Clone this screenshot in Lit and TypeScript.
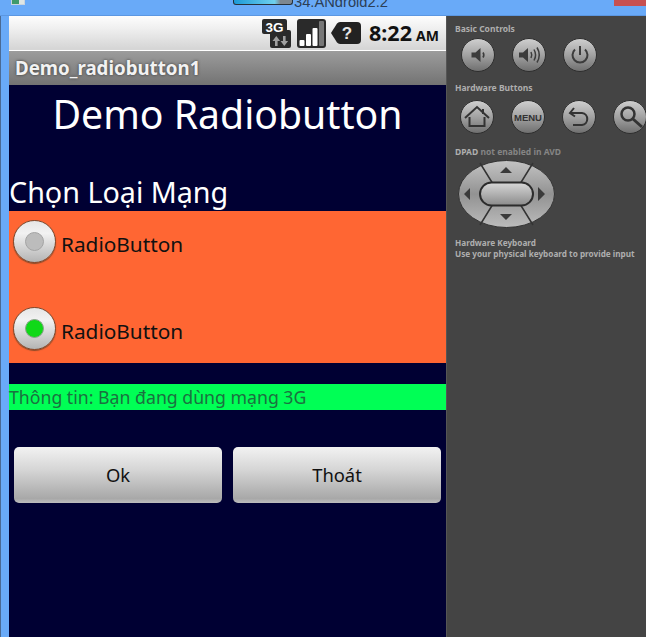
import { LitElement, html, css, svg } from "lit";
import { customElement } from "lit/decorators.js";

const hwDefs = svg`<defs>
  <linearGradient id="ball" x1="0" y1="0" x2="0" y2="1">
    <stop offset="0" stop-color="#d0d0d0"/><stop offset="0.5" stop-color="#a2a2a2"/><stop offset="1" stop-color="#6e6e6e"/>
  </linearGradient>
</defs>`;

const icons: Record<string, unknown> = {
  down: svg`<path d="M10.5 14.5h4l5-4.5v14l-5-4.5h-4z" fill="#3c3c3c"/><path d="M22 14.5c1 1.5 1 3.5 0 5" fill="none" stroke="#3c3c3c" stroke-width="1.6"/>`,
  up: svg`<path d="M7 14.5h4l5-4.5v14l-5-4.5H7z" fill="#3c3c3c"/><path d="M19 14c1 2 1 4 0 6M22 11.500c2 3.500 2 7.500 0 11M25 9.500c3 5 3 10 0 15" fill="none" stroke="#3c3c3c" stroke-width="1.500"/>`,
  power: svg`<path d="M12 11.500a7.500 7.500 0 1 0 10 0" fill="none" stroke="#3c3c3c" stroke-width="2"/><path d="M17 8v9" stroke="#3c3c3c" stroke-width="2"/>`,
  home: svg`<path d="M5 18 17 7l12 11M9.500 17v9h15v-9M23 9v5" fill="none" stroke="#333" stroke-width="2"/>`,
  menu: svg`<text x="17" y="21" text-anchor="middle" font-family="Liberation Sans, sans-serif" font-weight="700" font-size="9.500" fill="#333">MENU</text>`,
  back: svg`<path d="M12 8 8 13l5 3.500M9 13h11c7 .5 7 11.500 0 12h-9" fill="none" stroke="#333" stroke-width="2"/>`,
  search: svg`<circle cx="15" cy="14" r="6.500" fill="none" stroke="#333" stroke-width="2.500"/><path d="m20 19 9 8" stroke="#333" stroke-width="3"/>`,
};

const hw = (k: string) => html`<svg class="hw" viewBox="0 0 34 34" width="34" height="34">
  ${hwDefs}
  <circle cx="17" cy="17" r="16.500" fill="url(#ball)" stroke="#2e2e2e" stroke-width="1"/>
  ${icons[k]}
</svg>`;

@customElement("app-root")
export class AppRoot extends LitElement {
  static styles = css`
    :host { display: block; width: 646px; height: 637px; overflow: hidden; background: #69aaf8; font-family: "Noto Sans", "Open Sans", sans-serif; }
    .top { display: flex; align-items: flex-start; padding-left: 11px; border-bottom: 1px solid #5b97e2; box-sizing: border-box; height: 16px; overflow: hidden; }
    .doc { width: 14px; height: 5px; background: linear-gradient(90deg, #3f9a6c 0 60%, #dfe6e4 60%); border: 1px solid #c9d4de; border-top: 0; box-sizing: border-box; }
    .prog { width: 60px; height: 5px; margin-left: 208px; box-sizing: border-box; border: 1px solid #26303a; border-top: 0; background: linear-gradient(90deg, #1d9ad8, #6fd0ee 70%, #7d8790 80%); border-radius: 0 0 3px 3px; }
    .wtitle { margin: -8px 0 0 1px; font: 14.700px/20px "Liberation Sans", sans-serif; color: #2c3e55; white-space: nowrap; }
    .close { margin-left: auto; width: 32px; height: 6px; background: #c75050; }
    .main { display: flex; height: 621px; }
    .strip { width: 9px; flex: none; box-sizing: border-box; border-left: 1px solid #4a6a94; }
    .phone { width: 437px; flex: none; display: flex; flex-direction: column; background: #000033; }
    .status { height: 34px; flex: none; box-sizing: border-box; background: linear-gradient(#fdfdfd, #f0f0f0 35%, #d6d6d6 95%); display: flex; align-items: center; padding-left: 253px; }
    .status svg { display: block; flex: none; }
    .sig { margin-left: 6px; }
    .bub { margin-left: 5px; }
    .time { margin-left: 8px; font: 700 21.500px/1 "Noto Sans", sans-serif; color: #111; white-space: nowrap; }
    .ampm { margin-left: 4px; font-size: 14px; }
    .appbar { height: 35px; flex: none; box-sizing: border-box; background: linear-gradient(#9c9c9c, #737373); border-top: 1px solid #fff; color: #f2f2f2; font: 700 18.700px/33px "Noto Sans", sans-serif; padding-left: 6px; text-shadow: 0 0 3px #333; }
    .h1 { text-align: center; color: #fff; font-size: 39.200px; line-height: 50px; height: 50px; padding-top: 4px; flex: none; }
    .h2 { color: #fff; font-size: 28.700px; line-height: 40px; height: 40px; margin-top: 33px; white-space: nowrap; margin-bottom: -1px; flex: none; }
    .group { background: #ff6633; height: 152px; flex: none; display: flex; flex-direction: column; }
    .row { display: flex; align-items: center; height: 44px; padding-left: 4px; color: #111; font-size: 20.800px; gap: 5px; }
    .row.a { margin-top: 8px; }
    .row.b { margin-top: 43px; }
    .lbl { padding-top: 6px; }
    .radio { width: 43px; height: 43px; box-sizing: border-box; border-radius: 50%; border: 1px solid #7a4a30; background: linear-gradient(#e6e6e6, #f2f2f2 30%, #b4b4b4); display: flex; align-items: center; justify-content: center; box-shadow: 0 1px 1px #8a4a28; }
    .dot { width: 19px; height: 19px; box-sizing: border-box; border-radius: 50%; background: #bcbcbc; border: 1px solid #a4a4a4; }
    .dot.on { background: #10d818; border: 1px solid #8aa08a; }
    .info { margin-top: 21px; height: 26px; flex: none; background: #00ff55; color: #1c7040; font-size: 17.700px; line-height: 26px; white-space: nowrap; }
    .btns { display: flex; gap: 11px; padding: 37px 5px 0; }
    .btn { flex: 1; height: 56px; border-radius: 5px; background: linear-gradient(#f2f2f2, #d6d6d6 40%, #a8a8a8 92%, #bdbdbd); display: flex; align-items: center; justify-content: center; color: #111; font-size: 18.400px; padding-bottom: 1px; box-sizing: border-box; }
    .panel { width: 200px; flex: none; overflow: hidden; background: #444; border-left: 1px solid #555; box-sizing: border-box; display: flex; flex-direction: column; padding: 7px 0 0 8px; color: #aeaeae; font: 700 8.500px/11px "Noto Sans", sans-serif; white-space: nowrap; }
    .hwrow { display: flex; margin-top: 4px; padding-left: 6px; gap: 17px; height: 34px; }
    .hwrow.hard { padding-left: 5px; margin-top: 7px; }
    .hwrow svg { flex: none; }
    .lab2 { margin-top: 10px; }
    .lab3 { margin-top: 12px; }
    .dim { color: #858585; }
    .dpad { display: block; margin: 3px 0 0 3px; flex: none; }
    .kb { margin-top: 9px; font-size: 8.200px; }
  `;

  render() {
    return html`
      <div class="top">
        <div class="doc"></div>
        <div class="prog"></div>
        <div class="wtitle">34.ANdroid2.2</div>
        <div class="close"></div>
      </div>
      <div class="main">
        <div class="strip"></div>
        <div class="phone">
          <div class="status">
            <svg width="29" height="29" viewBox="0 0 29 29">
              <rect x="8" y="11" width="21" height="18" rx="2" fill="#2a2a2a"/>
              <rect x="0" y="0" width="25" height="15" rx="2" fill="#2a2a2a"/>
              <text x="12.500" y="12.500" text-anchor="middle" font-family="Liberation Sans, sans-serif" font-weight="700" font-size="13.500" fill="#fff">3G</text>
              <path d="M13 27v-5h-2.500l3.800-5 3.800 5h-2.500v5zM21 17v5h-2.500l3.800 5 3.800-5h-2.500v-5z" fill="#a0a0a0"/>
            </svg>
            <svg class="sig" width="29" height="29" viewBox="0 0 29 29">
              <rect width="29" height="29" rx="3" fill="#2a2a2a"/>
              <rect x="2.500" y="21" width="5" height="6" rx="1" fill="#fff"/>
              <rect x="9" y="15" width="5" height="12" rx="1" fill="#fff"/>
              <rect x="15.500" y="9" width="5" height="18" rx="1" fill="#fff"/>
              <rect x="22" y="2" width="5" height="25" rx="1" fill="#777"/>
            </svg>
            <svg class="bub" width="30" height="22" viewBox="0 0 30 22">
              <path d="M9 0h17a4 4 0 0 1 4 4v14a4 4 0 0 1-4 4H9a4 4 0 0 1-3-1.500L0 11l6-9.500A4 4 0 0 1 9 0z" fill="#222"/>
              <text x="16" y="17" text-anchor="middle" font-family="Liberation Sans, sans-serif" font-weight="700" font-size="17" fill="#e6e6e6">?</text>
            </svg>
            <div class="time">8:22<span class="ampm">AM</span></div>
          </div>
          <div class="appbar">Demo_radiobutton1</div>
          <div class="h1">Demo Radiobutton</div>
          <div class="h2">Chọn Loại Mạng</div>
          <div class="group">
            <div class="row a"><div class="radio"><div class="dot"></div></div><span class="lbl">RadioButton</span></div>
            <div class="row b"><div class="radio"><div class="dot on"></div></div><span class="lbl">RadioButton</span></div>
          </div>
          <div class="info">Thông tin: Bạn đang dùng mạng 3G</div>
          <div class="btns">
            <div class="btn">Ok</div>
            <div class="btn">Thoát</div>
          </div>
        </div>
        <div class="panel">
          <div>Basic Controls</div>
          <div class="hwrow">${hw("down")}${hw("up")}${hw("power")}</div>
          <div class="lab2">Hardware Buttons</div>
          <div class="hwrow hard">${hw("home")}${hw("menu")}${hw("back")}${hw("search")}</div>
          <div class="lab3">DPAD <span class="dim">not enabled in AVD</span></div>
          <svg class="dpad" width="97" height="68" viewBox="0 0 97 68">
            <defs>
              <linearGradient id="dp" x1="0" y1="0" x2="0" y2="1">
                <stop offset="0" stop-color="#c4c4c4"/><stop offset="0.5" stop-color="#929292"/><stop offset="1" stop-color="#bcbcbc"/>
              </linearGradient>
              <linearGradient id="dc" x1="0" y1="0" x2="0" y2="1">
                <stop offset="0" stop-color="#d8d8d8"/><stop offset="1" stop-color="#8a8a8a"/>
              </linearGradient>
            </defs>
            <ellipse cx="48.500" cy="34" rx="48" ry="33.500" fill="url(#dp)" stroke="#333"/>
            <path d="M22 3 35 24M75 3 62 24M22 65 35 44M75 65 62 44" stroke="#333" stroke-width="1.500"/>
            <rect x="22" y="22.500" width="53" height="23" rx="11.500" fill="url(#dc)" stroke="#2c2c2c" stroke-width="2"/>
            <path d="M42 13 48 7l6 6zM42 54h12l-6 6zM12 28v12l-6-6zM80 27l7 7-7 7z" fill="#3a3a3a"/>
          </svg>
          <div class="kb">Hardware Keyboard<br />Use your physical keyboard to provide input</div>
        </div>
      </div>
    `;
  }
}
